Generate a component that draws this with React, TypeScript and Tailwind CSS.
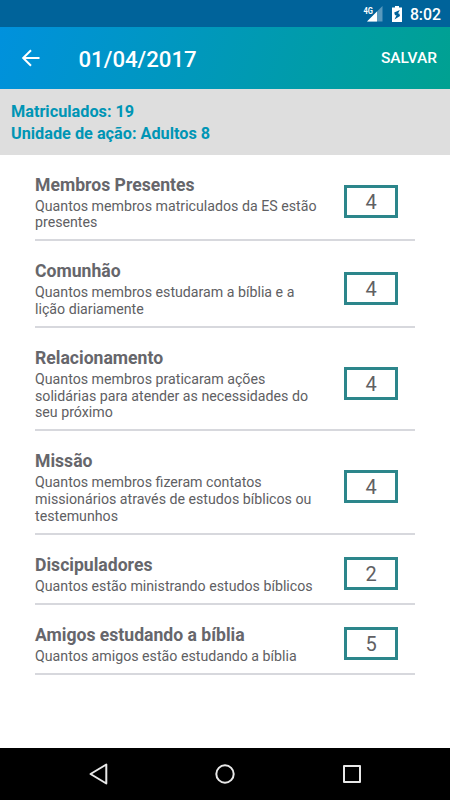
type ItemProps = {
  title: string;
  lines: string[];
  value: number;
};

const items: ItemProps[] = [
  { title: "Membros Presentes", lines: ["Quantos membros matriculados da ES estão", "presentes"], value: 4 },
  { title: "Comunhão", lines: ["Quantos membros estudaram a bíblia e a", "lição diariamente"], value: 4 },
  { title: "Relacionamento", lines: ["Quantos membros praticaram ações", "solidárias para atender as necessidades do", "seu próximo"], value: 4 },
  { title: "Missão", lines: ["Quantos membros fizeram contatos", "missionários através de estudos bíblicos ou", "testemunhos"], value: 4 },
  { title: "Discipuladores", lines: ["Quantos estão ministrando estudos bíblicos"], value: 2 },
  { title: "Amigos estudando a bíblia", lines: ["Quantos amigos estão estudando a bíblia"], value: 5 },
];

const StatusBar = () => (
  <div className="flex h-[27px] shrink-0 items-center justify-end bg-[#00639a] pr-[9px] text-white">
    {/* signal */}
    <svg width="20" height="16" viewBox="0 0 20 16" className="mr-[9px]">
      <path d="M19.500 0v15.500H4z" fill="#fff" fillOpacity="0.35" />
      <path d="M14 5.500v10H4z" fill="#fff" />
      <rect x="0" y="0" width="10.500" height="8" fill="#00639a" />
      <text x="0.500" y="7.500" fill="#fff" fontSize="8.500" fontWeight="700" textLength="9.500" lengthAdjust="spacingAndGlyphs">4G</text>
    </svg>
    {/* battery */}
    <svg width="10" height="16" viewBox="0 0 10 16" className="mr-2">
      <path d="M3 0h4v1.500h3V16H0V1.500h3z" fill="#fff" />
      <path d="M7.800 4 2.200 6.500 3 9.300h1.500L2.500 13.500 8 10 7.300 7.600H6z" fill="#00639a" />
    </svg>
    <span className="pt-[2px] text-[15.800px] font-medium leading-[25px]">8:02</span>
  </div>
);

const Item = ({ title, lines, value }: ItemProps) => (
  <div className="border-b-2 border-[#d7d8dd] pt-5 pb-[8.300px]">
    <div className="flex items-center justify-between pr-[17px]">
      <div>
        <h2 className="mb-[2px] text-[17.600px] font-bold leading-[21px] text-[#66666b]">{title}</h2>
        {lines.map((line) => (
          <p key={line} className="whitespace-nowrap text-[14.200px] leading-[16.700px] text-[#606063]">{line}</p>
        ))}
      </div>
      <div className="mb-[2px] flex h-[33px] w-[54px] items-center justify-center border-3 border-[#2c868b] pt-px text-[20px] leading-none text-[#606063]">
        {value}
      </div>
    </div>
  </div>
);

const App = () => {
  return (
    <div className="flex h-[800px] w-[450px] flex-col overflow-hidden bg-white font-['Roboto',sans-serif]">
      <StatusBar />
      {/* header */}
      <header className="flex h-[62px] shrink-0 items-center bg-linear-[110deg,#0091dd,#00a191] pl-[21px] pr-[13px] text-white">
        <svg width="20" height="18" viewBox="0 0 20 18" fill="none" stroke="#fff" strokeWidth="2" className="mr-[37.500px]">
          <path d="M18.500 9H2.500M10 1.200 2.200 9l7.800 7.800" />
        </svg>
        <h1 className="flex-1 pt-[3px] text-[22.200px] font-medium">01/04/2017</h1>
        <button className="pt-[2px] text-[15.500px] font-medium">SALVAR</button>
      </header>
      <section className="h-[65.500px] shrink-0 bg-[#dedede] pl-[11px] pt-3 text-[16.250px] font-bold leading-[22px] text-[#0095b5]">
        <p>Matriculados: 19</p>
        <p>Unidade de ação: Adultos 8</p>
      </section>
      {/* form */}
      <main className="flex-1 px-[35px]">
        {items.map((item) => (
          <Item key={item.title} {...item} />
        ))}
      </main>
      {/* navigation */}
      <nav className="flex h-[52px] shrink-0 items-center justify-between bg-black pl-[88px] pr-[88px]">
        <svg width="20" height="22" viewBox="0 0 20 22" fill="none" stroke="#e8e8e8" strokeWidth="2" strokeLinejoin="round">
          <path d="M18.300 1.500v19L2.500 11z" />
        </svg>
        <svg width="20" height="20" viewBox="0 0 20 20" fill="none" stroke="#e8e8e8" strokeWidth="2">
          <circle cx="10" cy="10" r="8.700" />
        </svg>
        <svg width="20" height="20" viewBox="0 0 20 20" fill="none" stroke="#e8e8e8" strokeWidth="2" strokeLinejoin="round">
          <rect x="2" y="2" width="16" height="16" />
        </svg>
      </nav>
    </div>
  );
};

export default App;
